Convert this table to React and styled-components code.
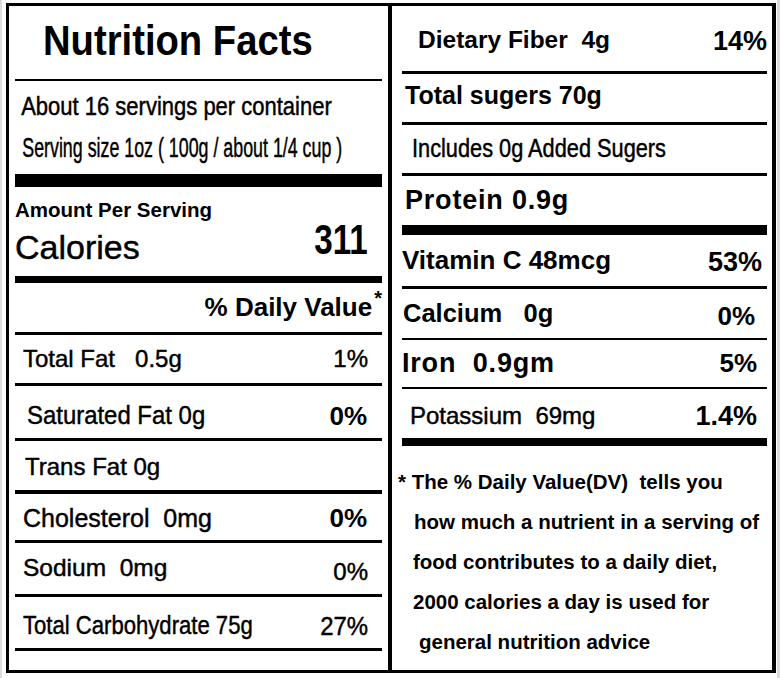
import styled, { createGlobalStyle } from "styled-components";

const GlobalStyle = createGlobalStyle`
  body {
    margin: 0;
    background: #fff;
    color: #000;
    font-family: "Liberation Sans", Arial, sans-serif;
  }
`;

const Frame = styled.div`
  display: inline-block;
  border-left: 2px solid #dcdcdc;
  border-right: 3px solid #dcdcdc;
  padding: 3px 1px 5px 4px;
`;

const Label = styled.div`
  width: 770px;
  height: 670px;
  box-sizing: border-box;
  border-style: solid;
  border-color: #000;
  border-width: 3px 4px 3px 3px;
  display: grid;
  grid-template-columns: 383px 380px;
`;

const Column = styled.div`
  display: flex;
  flex-direction: column;
  border-right: ${p => (p.$divider ? "4px solid #000" : "none")};
`;

const Row = styled.div`
  flex-shrink: 0;
  box-sizing: border-box;
  height: ${p => p.$h + p.$rule}px;
  margin: 0 ${p => p.$mr}px 0 ${p => p.$ml}px;
  padding: 0 ${p => p.$pr || 0}px 0 ${p => p.$pl || 0}px;
  border-bottom: ${p => p.$rule}px solid #000;
  display: flex;
  align-items: center;
  justify-content: ${p => (p.$end ? "flex-end" : "space-between")};
`;

const Block = styled(Row)`
  flex-direction: column;
  align-items: stretch;
  justify-content: flex-start;
  padding-top: ${p => p.$pt}px;
  gap: ${p => p.$gap}px;
`;

const Text = styled.span`
  display: inline-block;
  white-space: pre;
  font-size: ${p => p.$size}px;
  font-weight: ${p => (p.$bold ? 700 : 400)};
  -webkit-text-stroke: ${p => (p.$bold ? "0" : "0.45px")} #000;
  letter-spacing: ${p => p.$ls || 0}px;
  line-height: ${p => (p.$lh ? `${p.$lh}px` : "normal")};
  padding-left: ${p => p.$pl || 0}px;
  transform: translateY(${p => p.$dy || 0}px) scaleX(${p => p.$sx || 1});
  transform-origin: ${p => (p.$right ? "right" : "left")} center;
`;

const CalRow = styled.div`
  height: 40px;
  display: flex;
  align-items: center;
  justify-content: space-between;
  padding-right: 14px;
`;

const Star = styled.span`
  font-size: 20px;
  font-weight: 700;
  margin-left: 2px;
  transform: translateY(-9px);
`;

const Footnote = styled.div`
  padding-top: 15.5px;
  font-size: 20.5px;
  font-weight: 700;
`;

const FootLine = styled.div`
  line-height: 40px;
  white-space: pre;
  padding-left: ${p => p.$indent}px;
`;

const left = { $ml: 6, $mr: 6 };
const right = { $ml: 10, $mr: 5 };

const footLines = [
  ["* The % Daily Value(DV)  tells you", 6],
  ["how much a nutrient in a serving of", 22],
  ["food contributes to a daily diet,", 21],
  ["2000 calories a day is used for", 21],
  ["general nutrition advice", 27],
];

export default function App() {
  return (
    <>
      <GlobalStyle />
      <Frame>
        <Label>
          <Column $divider>
            <Row {...left} $h={73} $rule={2} $pl={28}>
              <Text $size={42} $bold $sx={0.91} $dy={-2.5}>Nutrition Facts</Text>
            </Row>
            <Block {...left} $h={93} $rule={13} $pt={10} $gap={12}>
              <Text $size={25} $sx={0.88} $lh={30} $pl={7}>About 16 servings per container</Text>
              <Text $size={27} $sx={0.66} $lh={30} $pl={11}>Serving size 1oz ( 100g / about 1/4 cup )</Text>
            </Block>
            <Block {...left} $h={89} $rule={7} $pt={10.5} $gap={5.5}>
              <Text $size={20.5} $bold $lh={24}>Amount Per Serving</Text>
              <CalRow>
                <Text $size={34}>Calories</Text>
                <Text $size={42} $bold $sx={0.79} $right $dy={-7}>311</Text>
              </CalRow>
            </Block>
            <Row {...left} $h={49} $rule={3} $end>
              <Text $size={26} $bold>% Daily Value</Text>
              <Star>*</Star>
            </Row>
            <Row {...left} $h={48} $rule={3} $pl={8} $pr={14}>
              <Text $size={24}>Total Fat   0.5g</Text>
              <Text $size={24}>1%</Text>
            </Row>
            <Row {...left} $h={52} $rule={3} $pl={12} $pr={15}>
              <Text $size={26} $sx={0.92} $dy={3}>Saturated Fat 0g</Text>
              <Text $size={26} $bold $dy={4}>0%</Text>
            </Row>
            <Row {...left} $h={49} $rule={4} $pl={10}>
              <Text $size={24} $dy={1}>Trans Fat 0g</Text>
            </Row>
            <Row {...left} $h={46} $rule={3} $pl={8} $pr={15}>
              <Text $size={25} $dy={1}>Cholesterol  0mg</Text>
              <Text $size={26} $bold $dy={1}>0%</Text>
            </Row>
            <Row {...left} $h={51} $rule={3} $pl={8} $pr={14}>
              <Text $size={24.5} $dy={-1}>Sodium  0mg</Text>
              <Text $size={24} $dy={2.5}>0%</Text>
            </Row>
            <Row {...left} $h={51} $rule={3} $pl={8} $pr={14}>
              <Text $size={26} $sx={0.85} $dy={2.5}>Total Carbohydrate 75g</Text>
              <Text $size={26} $sx={0.92} $right $dy={3.5}>27%</Text>
            </Row>
          </Column>

          <Column>
            <Row {...right} $h={65} $rule={3} $pl={16}>
              <Text $size={24.5} $bold $dy={1}>Dietary Fiber  4g</Text>
              <Text $size={27} $bold $dy={3}>14%</Text>
            </Row>
            <Row {...right} $h={48} $rule={3} $pl={3}>
              <Text $size={25} $bold $dy={-3}>Total sugers 70g</Text>
            </Row>
            <Row {...right} $h={48} $rule={3} $pl={10}>
              <Text $size={25} $sx={0.87} $dy={-1}>Includes 0g Added Sugers</Text>
            </Row>
            <Row {...right} $h={49} $rule={10} $pl={3}>
              <Text $size={27} $bold $ls={0.8}>Protein 0.9g</Text>
            </Row>
            <Row {...right} $h={51} $rule={3} $pr={5}>
              <Text $size={26} $bold>Vitamin C 48mcg</Text>
              <Text $size={27} $bold $dy={2}>53%</Text>
            </Row>
            <Row {...right} $h={49} $rule={2} $pl={1} $pr={12}>
              <Text $size={25.5} $bold>Calcium   0g</Text>
              <Text $size={26} $bold $dy={2.5}>0%</Text>
            </Row>
            <Row {...right} $h={47} $rule={2} $pr={10}>
              <Text $size={27} $bold $ls={0.8}>Iron  0.9gm</Text>
              <Text $size={26} $bold>5%</Text>
            </Row>
            <Row {...right} $h={49} $rule={8} $pl={8} $pr={10}>
              <Text $size={24} $dy={2}>Potassium  69mg</Text>
              <Text $size={27} $bold $dy={2.5}>1.4%</Text>
            </Row>
            <Footnote>
              {footLines.map(([line, indent]) => (
                <FootLine key={line} $indent={indent}>{line}</FootLine>
              ))}
            </Footnote>
          </Column>
        </Label>
      </Frame>
    </>
  );
}
